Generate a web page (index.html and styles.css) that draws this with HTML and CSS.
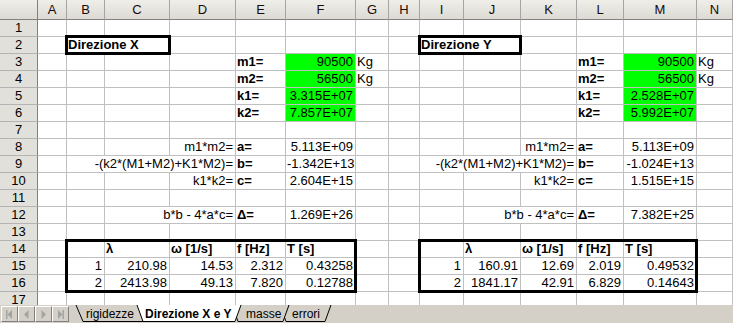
FILE: index.html
```html
<!DOCTYPE html>
<html lang="it">
<head>
    <meta charset="UTF-8">
    <meta name="viewport" content="width=device-width, initial-scale=1.0">
    <title>Direzione X e Y</title>
    <link rel="stylesheet" href="styles.css">
</head>
<body>
    <div class="window">
        <div class="sheet" id="sheet">
            <!-- Cells will be populated by JavaScript -->
            <div class="box box-dir-x"></div>
            <div class="box box-dir-y"></div>
            <div class="box box-tab-x"></div>
            <div class="box box-tab-y"></div>
        </div>

        <div class="tabbar">
            <div class="nav">
                <div class="nav-btn">
                    <svg width="9" height="9" viewBox="0 0 9 9"><rect x="1" y="0" width="1.5" height="9"/><polygon points="7,0 7,9 2.5,4.5"/></svg>
                </div>
                <div class="nav-btn">
                    <svg width="9" height="9" viewBox="0 0 9 9"><polygon points="6.5,0 6.5,9 2,4.5"/></svg>
                </div>
                <div class="nav-btn">
                    <svg width="9" height="9" viewBox="0 0 9 9"><polygon points="2.5,0 2.5,9 7,4.5"/></svg>
                </div>
                <div class="nav-btn">
                    <svg width="9" height="9" viewBox="0 0 9 9"><polygon points="2,0 2,9 6.5,4.5"/><rect x="6.5" y="0" width="1.5" height="9"/></svg>
                </div>
            </div>
            <svg class="tabs" width="661" height="18" viewBox="0 0 661 18">
                <polygon class="tab" points="208,0 214,16.5 253,16.5 259,0"/>
                <polyline class="tab-edge" points="208,0 214,16.5 253,16.5 259,0"/>
                <text class="tab-label" x="220" y="13">errori</text>
                <polygon class="tab" points="160,0 166,16.5 211,16.5 217,0"/>
                <polyline class="tab-edge" points="160,0 166,16.5 211,16.5 217,0"/>
                <text class="tab-label" x="174" y="13">masse</text>
                <polygon class="tab" points="4,0 11,16.5 72,16.5 79,0"/>
                <polyline class="tab-edge" points="4,0 11,16.5 72,16.5 79,0"/>
                <text class="tab-label" x="14" y="13">rigidezze</text>
                <polygon class="tab-active" points="65,0 71,16.5 163,16.5 169,0"/>
                <polyline class="tab-edge" points="65,0 71,16.5 163,16.5 169,0"/>
                <text class="tab-label active" x="73" y="13">Direzione X e Y</text>
            </svg>
        </div>
    </div>

    <script>
document.addEventListener('DOMContentLoaded', () => {
    const sheet = document.getElementById('sheet');
    const firstBox = sheet.querySelector('.box');

    const cols = 'ABCDEFGHIJKLMN'.split('');
    const rowCount = 17;

    // text, classes, columns spanned
    const cells = {
        B2: ['Direzione X', 'bold', 2],
        I2: ['Direzione Y', 'bold', 2],

        E3: ['m1=', 'bold'], F3: ['90500', 'num green'], G3: ['Kg'],
        L3: ['m1=', 'bold'], M3: ['90500', 'num green'], N3: ['Kg'],
        E4: ['m2=', 'bold'], F4: ['56500', 'num green'], G4: ['Kg'],
        L4: ['m2=', 'bold'], M4: ['56500', 'num green'], N4: ['Kg'],
        E5: ['k1=', 'bold'], F5: ['3.315E+07', 'num green'],
        L5: ['k1=', 'bold'], M5: ['2.528E+07', 'num green'],
        E6: ['k2=', 'bold'], F6: ['7.857E+07', 'num green'],
        L6: ['k2=', 'bold'], M6: ['5.992E+07', 'num green'],

        D8: ['m1*m2=', 'num'], E8: ['a=', 'bold'], F8: ['5.113E+09', 'num'],
        K8: ['m1*m2=', 'num'], L8: ['a=', 'bold'], M8: ['5.113E+09', 'num'],
        B9: ['-(k2*(M1+M2)+K1*M2)=', 'num', 3], E9: ['b=', 'bold'], F9: ['-1.342E+13', 'num'],
        I9: ['-(k2*(M1+M2)+K1*M2)=', 'num', 3], L9: ['b=', 'bold'], M9: ['-1.024E+13', 'num'],
        D10: ['k1*k2=', 'num'], E10: ['c=', 'bold'], F10: ['2.604E+15', 'num'],
        K10: ['k1*k2=', 'num'], L10: ['c=', 'bold'], M10: ['1.515E+15', 'num'],
        C12: ['b*b - 4*a*c=', 'num', 2], E12: ['\u0394=', 'bold'], F12: ['1.269E+26', 'num'],
        J12: ['b*b - 4*a*c=', 'num', 2], L12: ['\u0394=', 'bold'], M12: ['7.382E+25', 'num'],

        C14: ['\u03bb', 'bold'], D14: ['\u03c9 [1/s]', 'bold'], E14: ['f [Hz]', 'bold'], F14: ['T [s]', 'bold'],
        J14: ['\u03bb', 'bold'], K14: ['\u03c9 [1/s]', 'bold'], L14: ['f [Hz]', 'bold'], M14: ['T [s]', 'bold'],
        B15: ['1', 'num'], C15: ['210.98', 'num'], D15: ['14.53', 'num'], E15: ['2.312', 'num'], F15: ['0.43258', 'num'],
        I15: ['1', 'num'], J15: ['160.91', 'num'], K15: ['12.69', 'num'], L15: ['2.019', 'num'], M15: ['0.49532', 'num'],
        B16: ['2', 'num'], C16: ['2413.98', 'num'], D16: ['49.13', 'num'], E16: ['7.820', 'num'], F16: ['0.12788', 'num'],
        I16: ['2', 'num'], J16: ['1841.17', 'num'], K16: ['42.91', 'num'], L16: ['6.829', 'num'], M16: ['0.14643', 'num']
    };

    function addCell(className, text) {
        const div = document.createElement('div');
        div.className = className;
        if (text) div.textContent = text;
        sheet.insertBefore(div, firstBox);
        return div;
    }

    // column headers
    addCell('corner');
    cols.forEach(col => addCell('col-head', col));

    for (let r = 1; r <= rowCount; r++) {
        addCell('row-head', String(r));
        let c = 0;
        while (c < cols.length) {
            const entry = cells[cols[c] + r];
            if (entry) {
                const [text, cls, span] = entry;
                let className = 'cell';
                if (cls) className += ' ' + cls;
                if (span) className += ' span-' + span;
                addCell(className, text);
                c += span || 1;
            } else {
                addCell('cell');
                c++;
            }
        }
    }
});
    </script>
</body>
</html>
```

FILE: styles.css
```css
body {
    margin: 0;
    font-family: "Liberation Sans", Arial, sans-serif;
    background-color: #ffffff;
    color: #000;
}

.window {
    width: 733px;
    height: 323px;
    overflow: hidden;
    display: flex;
    flex-direction: column;
}

/* grid of the worksheet */

.sheet {
    position: relative;
    display: grid;
    grid-template-columns: 38px 29px 38px 65px 66px 50px 70px 33px 31px 44px 57px 56px 47px 73px 36px;
    grid-template-rows: 20px repeat(17, 17px);
    height: 305px;
    overflow: hidden;
    font-size: 13px;
}

.corner,
.col-head,
.row-head {
    background: linear-gradient(to bottom, #efeee9, #dcdad3);
    box-sizing: border-box;
    text-align: center;
}

.corner {
    border-right: 1px solid #808080;
    border-bottom: 1px solid #808080;
}

.col-head {
    border-right: 1px solid #a5a5a5;
    border-bottom: 1px solid #808080;
    line-height: 19px;
    color: #1a0a0a;
}

.row-head {
    background: #e2e0da;
    border-right: 1px solid #808080;
    border-bottom: 1px solid #b4b4b4;
    line-height: 16px;
}

.cell {
    box-sizing: border-box;
    border-right: 1px solid #c0c0c0;
    border-bottom: 1px solid #c0c0c0;
    padding: 0 2px 0 1px;
    line-height: 16px;
    white-space: nowrap;
    overflow: hidden;
}

.cell.num {
    text-align: right;
}

.cell.bold {
    font-weight: bold;
}

.cell.green {
    background-color: #00ff00;
}

.span-2 {
    grid-column: span 2;
}

.span-3 {
    grid-column: span 3;
}

/* thick outlines drawn over the cell ranges */

.box {
    position: absolute;
    top: -2px;
    left: -2px;
    right: -1px;
    bottom: -1px;
    border: 3px solid #000;
    pointer-events: none;
}

.box-dir-x {
    grid-column: 3 / 5;
    grid-row: 3 / 4;
}

.box-dir-y {
    grid-column: 10 / 12;
    grid-row: 3 / 4;
}

.box-tab-x {
    grid-column: 3 / 8;
    grid-row: 15 / 18;
}

.box-tab-y {
    grid-column: 10 / 15;
    grid-row: 15 / 18;
}

/* sheet tabs */

.tabbar {
    display: flex;
    height: 18px;
    background-color: #d4d0c8;
}

.nav {
    display: flex;
    width: 72px;
    padding: 1px 0 0 1px;
    box-sizing: border-box;
}

.nav-btn {
    width: 17px;
    height: 16px;
    box-sizing: border-box;
    border: 1px solid;
    border-color: #ffffff #808080 #808080 #ffffff;
    display: flex;
    align-items: center;
    justify-content: center;
}

.nav-btn svg {
    fill: #a3a3a3;
}

.tabs {
    display: block;
}

.tab {
    fill: #d4d0c8;
}

.tab-active {
    fill: #ffffff;
}

.tab-edge {
    fill: none;
    stroke: #000;
    stroke-width: 1;
}

.tab-label {
    font-family: "Liberation Sans", Arial, sans-serif;
    font-size: 12px;
    fill: #000;
}

.tab-label.active {
    font-weight: bold;
}
```
